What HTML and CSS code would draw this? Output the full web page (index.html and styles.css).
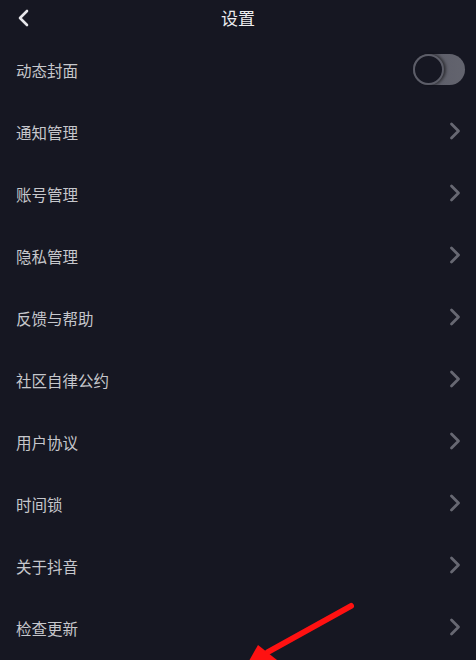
FILE: index.html
```html
<!DOCTYPE html>
<html lang="zh">
<head>
<meta charset="utf-8">
<link rel="stylesheet" href="styles.css">
</head>
<body>
<div class="page">
  <header class="bar">
    <svg class="back" width="14" height="18" viewBox="0 0 14 18"><path d="M11 2 L4 9 L11 16" fill="none" stroke="#e6e6ea" stroke-width="2.6" stroke-linecap="round" stroke-linejoin="round"/></svg>
    <div class="title">设置</div>
  </header>
  <ul class="list">
    <li class="row"><span class="label">动态封面</span><span class="toggle"><span class="knob"></span></span></li>
    <li class="row"><span class="label">通知管理</span><svg class="chev" width="14" height="20" viewBox="0 0 14 20"><path d="M3.5 3 L10.5 10 L3.5 17" fill="none" stroke="#676872" stroke-width="2.8" stroke-linecap="round" stroke-linejoin="round"/></svg></li>
    <li class="row"><span class="label">账号管理</span><svg class="chev" width="14" height="20" viewBox="0 0 14 20"><path d="M3.5 3 L10.5 10 L3.5 17" fill="none" stroke="#676872" stroke-width="2.8" stroke-linecap="round" stroke-linejoin="round"/></svg></li>
    <li class="row"><span class="label">隐私管理</span><svg class="chev" width="14" height="20" viewBox="0 0 14 20"><path d="M3.5 3 L10.5 10 L3.5 17" fill="none" stroke="#676872" stroke-width="2.8" stroke-linecap="round" stroke-linejoin="round"/></svg></li>
    <li class="row"><span class="label">反馈与帮助</span><svg class="chev" width="14" height="20" viewBox="0 0 14 20"><path d="M3.5 3 L10.5 10 L3.5 17" fill="none" stroke="#676872" stroke-width="2.8" stroke-linecap="round" stroke-linejoin="round"/></svg></li>
    <li class="row"><span class="label">社区自律公约</span><svg class="chev" width="14" height="20" viewBox="0 0 14 20"><path d="M3.5 3 L10.5 10 L3.5 17" fill="none" stroke="#676872" stroke-width="2.8" stroke-linecap="round" stroke-linejoin="round"/></svg></li>
    <li class="row"><span class="label">用户协议</span><svg class="chev" width="14" height="20" viewBox="0 0 14 20"><path d="M3.5 3 L10.5 10 L3.5 17" fill="none" stroke="#676872" stroke-width="2.8" stroke-linecap="round" stroke-linejoin="round"/></svg></li>
    <li class="row"><span class="label">时间锁</span><svg class="chev" width="14" height="20" viewBox="0 0 14 20"><path d="M3.5 3 L10.5 10 L3.5 17" fill="none" stroke="#676872" stroke-width="2.8" stroke-linecap="round" stroke-linejoin="round"/></svg></li>
    <li class="row"><span class="label">关于抖音</span><svg class="chev" width="14" height="20" viewBox="0 0 14 20"><path d="M3.5 3 L10.5 10 L3.5 17" fill="none" stroke="#676872" stroke-width="2.8" stroke-linecap="round" stroke-linejoin="round"/></svg></li>
    <li class="row"><span class="label">检查更新</span><svg class="chev" width="14" height="20" viewBox="0 0 14 20"><path d="M3.5 3 L10.5 10 L3.5 17" fill="none" stroke="#676872" stroke-width="2.8" stroke-linecap="round" stroke-linejoin="round"/></svg></li>
  </ul>
  <svg class="arrow" width="476" height="660" viewBox="0 0 476 660">
    <line x1="351" y1="606" x2="268" y2="652" stroke="#ff1111" stroke-width="6" stroke-linecap="round"/>
    <polygon points="245,668 258,645 277,660" fill="#ff1111"/>
  </svg>
</div>
</body>
</html>
```
FILE: styles.css
```css
html, body {
  margin: 0;
  padding: 0;
  background: #161722;
}
body {
  font-family: "Noto Sans CJK SC", "Noto Sans", sans-serif;
}
.page {
  position: relative;
  width: 476px;
  height: 660px;
  overflow: hidden;
  background: #161722;
}
.bar {
  position: relative;
  height: 36px;
  display: flex;
  align-items: center;
  justify-content: center;
}
.back {
  position: absolute;
  left: 16px;
  top: 9px;
}
.title {
  color: #ececef;
  font-size: 17px;
  line-height: 36px;
}
.list {
  list-style: none;
  margin: 0;
  padding: 3px 0 0 0;
}
.row {
  height: 62px;
  display: flex;
  align-items: center;
  justify-content: space-between;
  padding: 0 14px 0 16px;
}
.label {
  color: #c6c7cc;
  font-size: 15.5px;
}
.chev {
  margin-top: -2px;
}
.toggle {
  position: relative;
  width: 52px;
  height: 31px;
  border-radius: 16px;
  background: linear-gradient(90deg, #3a3b47 0%, #5f606b 55%, #63646e 100%);
  margin-right: -3px;
  margin-top: -1px;
}
.knob {
  position: absolute;
  left: 0;
  top: 0;
  width: 27px;
  height: 27px;
  border-radius: 50%;
  background: #161722;
  border: 2px solid #5c5d68;
  box-shadow: 2px 0 3px rgba(0,0,0,0.5);
}
.arrow {
  position: absolute;
  left: 0;
  top: 0;
  pointer-events: none;
}
```
